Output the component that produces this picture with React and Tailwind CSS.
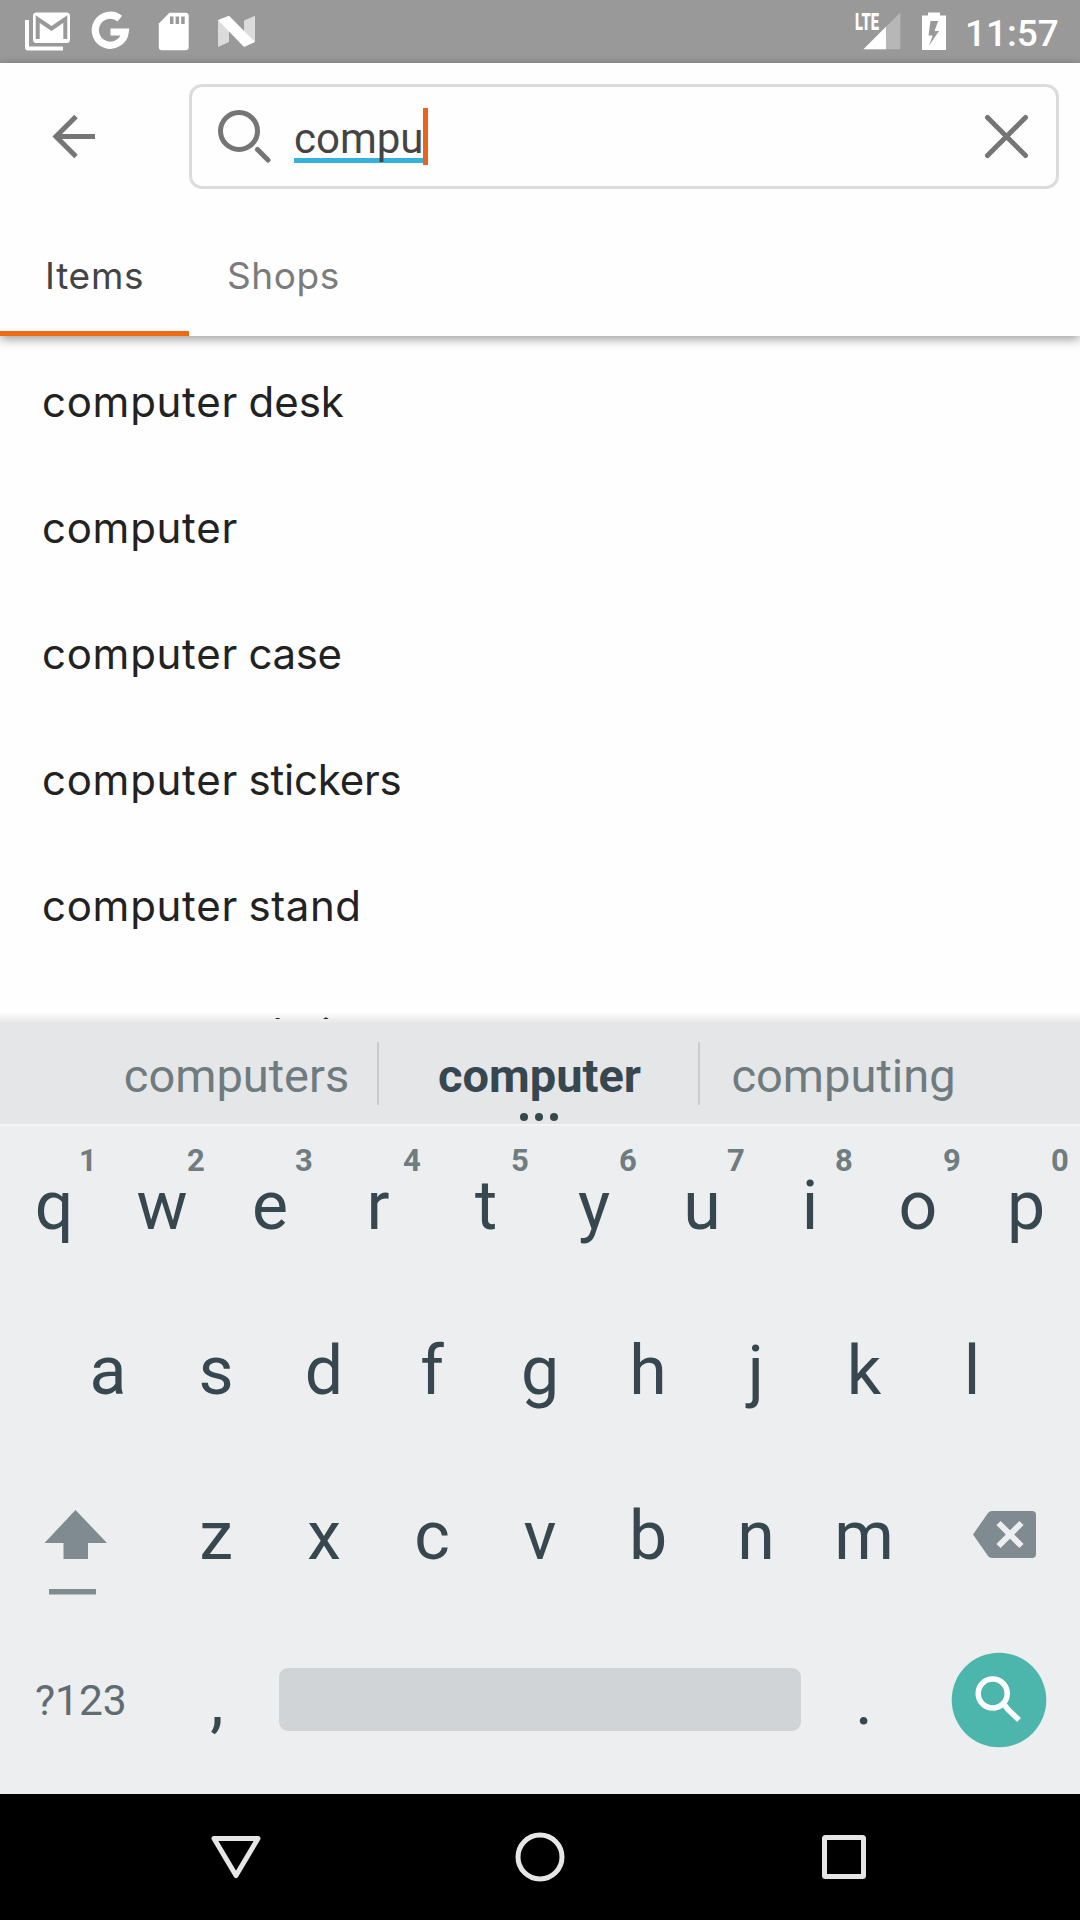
const letter = 'flex h-[165px] w-[108px] items-center justify-center pb-[5px]';

function StatusBar() {
  return (
    <header className="flex h-[63px] items-start bg-[#999999] text-white">
      <svg width="270" height="63" viewBox="0 0 270 63" fill="currentColor">
        <path d="M25 20h4v26.500h34V50.500H28q-3 0-3-3z" />
        <rect x="33" y="12.500" width="37" height="30.500" rx="3.500" />
        <path d="M37.700 39V19L51.500 28.500L65.300 19V39" fill="none" stroke="#999999" strokeWidth="4" />
        <path d="M119.800 18.600A15 15 0 1 0 125.200 32H110.500" fill="none" stroke="currentColor" strokeWidth="7.200" />
        <path d="M169.500 12.700H185.500q3.200 0 3.200 3.200V47q0 3.200-3.200 3.200H162q-3.200 0-3.200-3.200V23.500z" />
        <path d="M170 16.500h3.500v7.500H170zM175.600 16.500h3.500v7.500h-3.500zM181.200 16.500h3.500v7.500h-3.500z" fill="#999999" />
        <path d="M218 20V47L229 42V28zM255 15.700V42L244 38V20.500z" opacity="0.65" />
        <path d="M218 20L229 15.700L255 42L244 47z" />
      </svg>
      <div className="ml-auto flex h-full">
        <div className="relative w-[58px]">
          <span className="absolute left-[2px] top-[11px] origin-left scale-x-[0.640] text-[23px] font-black leading-[23px]">LTE</span>
          <svg className="absolute left-0 top-0" width="58" height="63" viewBox="853 0 58 63" fill="currentColor">
            <path d="M900.300 12.500V49.300H863.500z" opacity="0.3" />
            <path d="M886 26.800V49.300H863.500z" />
          </svg>
        </div>
        <svg width="48" height="63" viewBox="911 0 48 63" fill="currentColor">
          <path fillRule="evenodd" d="M928 12.500h12v3h6V50H922V15.500h6zM930.500 21L928.500 35.500H932.700L928.800 46L939 31H934.500L938.200 21z" />
        </svg>
        <span className="mt-[12px] w-[121px] pl-[6px] text-[37px] font-medium leading-[43px]">11:57</span>
      </div>
    </header>
  );
}

function SearchHeader() {
  return (
    <div className="relative z-10 h-[273px] bg-[#fefefe] shadow-[0_3px_10px_rgba(0,0,0,0.4)]">
      <div className="flex h-[147px] pt-[21px]">
        <svg className="ml-[52px] mt-[30px]" width="46" height="46" viewBox="0 0 46 46" fill="none" stroke="#757575" strokeWidth="5">
          <path d="M43 22.500H4M24 2.500L4 22.500L24 42.500" />
        </svg>
        <div className="ml-[91px] flex h-[105px] w-[870px] rounded-[13px] border-[3px] border-[#dcdcdc]">
          <svg className="ml-[24px] mt-[20px]" width="58" height="58" viewBox="0 0 58 58" fill="none" stroke="#757575" strokeWidth="5" strokeLinecap="round">
            <circle cx="23" cy="24" r="18.500" />
            <path d="M41.500 42.500L52 53" />
          </svg>
          <div className="relative ml-[20px] mt-[21px] flex h-[57px] text-[42px] leading-[62px] text-[#444444]">
            <span className="absolute left-0 top-[50px] h-[5px] w-[129px] bg-[#35b1de]" />
            <span className="relative w-[129px]">compu</span>
            <span className="h-[57px] w-[5px] bg-[#e8651a]" />
          </div>
          <svg className="ml-auto mr-[26px] mt-[26px]" width="48" height="48" viewBox="0 0 48 48" fill="none" stroke="#757575" strokeWidth="5" strokeLinecap="round">
            <path d="M5.500 4.500L43.500 42.500M43.500 4.500L5.500 42.500" />
          </svg>
        </div>
      </div>
      <nav className="flex h-[126px] font-[Inter,sans-serif] text-[37px] leading-[44px]">
        <div className="h-full w-[189px] border-b-[5px] border-[#f06a14] pl-[45px] pt-[44px] tracking-[0.7px] text-[#444444]">Items</div>
        <div className="pl-[38px] pt-[44px] tracking-[0.6px] text-[#7b7b7b]">Shops</div>
      </nav>
    </div>
  );
}

const results = [
  ['desk', 'tracking-normal'],
  ['', ''],
  ['case', 'tracking-[-0.400px]'],
  ['stickers', 'tracking-[-0.200px]'],
  ['stand', 'tracking-[0.600px]'],
  ['chair', 'tracking-normal'],
];

function Results() {
  return (
    <div className="relative h-[686px] overflow-hidden bg-[#fefefe] pt-[3px] font-[Inter,sans-serif] text-[42px] text-[#222222]">
      <ul>
        {results.map(([word, spacing]) => (
          <li key={word} className="h-[126px] pl-[42px] leading-[126px] last:pt-[2px]">
            <span className="tracking-[0.720px] [word-spacing:-2px]">computer </span>
            <span className={spacing}>{word}</span>
          </li>
        ))}
      </ul>
      <div className="absolute inset-x-0 bottom-0 h-[3px] bg-[#ececec]" />
      <div className="absolute inset-x-0 bottom-[3px] h-[7px] bg-gradient-to-t from-black/6 to-transparent" />
    </div>
  );
}

function Suggestions() {
  return (
    <div className="flex h-[104px] items-start border-b-2 border-[#f2f4f5] bg-[#e4e6e7] text-[47px] leading-[56px] text-[#6f7b7f]">
      <span className="w-[377px] pl-[96px] pt-[26px] text-center">computers</span>
      <span className="mt-[20px] h-[63px] w-[2px] bg-[#c9cdd0]" />
      <span className="relative w-[319px] pl-[2px] pt-[26px] text-center font-bold text-[#37474f]">
        computer
        <span className="absolute left-[141px] top-[91px] flex gap-[7px]">
          <i className="size-[8px] rounded-full bg-[#37474f]" />
          <i className="size-[8px] rounded-full bg-[#37474f]" />
          <i className="size-[8px] rounded-full bg-[#37474f]" />
        </span>
      </span>
      <span className="mt-[20px] h-[63px] w-[2px] bg-[#c9cdd0]" />
      <span className="w-[287px] pt-[26px] text-center">computing</span>
    </div>
  );
}

function Keyboard() {
  return (
    <div className="h-[668px] bg-[#eceeef] text-[68px] leading-[80px] text-[#37474f]">
      <div className="flex">
        {[...'qwertyuiop'].map((c, i) => (
          <div key={c} className={`${letter} relative`}>
            {c}
            <sup className="absolute left-[68px] top-[17px] w-[40px] text-center text-[31px] font-bold leading-[36px] text-[#6f7c80]">{(i + 1) % 10}</sup>
          </div>
        ))}
      </div>
      <div className="flex justify-center">
        {[...'asdfghjkl'].map((c) => <div key={c} className={letter}>{c}</div>)}
      </div>
      <div className="flex">
        <svg width="162" height="165" viewBox="0 1456 162 165" fill="#7f8b90">
          <path d="M75.500 1510L107 1543H88V1559H63.500V1543H44.500zM49 1589H96V1594.500H49z" />
        </svg>
        {[...'zxcvbnm'].map((c) => <div key={c} className={letter}>{c}</div>)}
        <svg width="162" height="165" viewBox="918 1456 162 165">
          <path d="M992 1511H1032q4 0 4 4V1554q0 4-4 4H992q-2.500 0-4-2L973 1534.500L988 1513q1.500-2 4-2z" fill="#7f8b90" />
          <path d="M998.500 1523L1021.500 1546M1021.500 1523L998.500 1546" stroke="#eceeef" strokeWidth="6" />
        </svg>
      </div>
      <div className="flex">
        <div className="flex h-[165px] w-[162px] items-center pb-[6px] pl-[35px] text-[42.500px] text-[#5f6c72]">?123</div>
        <div className={`${letter} pl-[2px]`}>,</div>
        <div className="mx-[9px] mt-[47px] h-[63px] w-[522px] rounded-[9px] bg-[#d0d4d7]" />
        <div className={letter}>.</div>
        <svg width="162" height="165" viewBox="918 1621 162 165">
          <circle cx="999" cy="1700" r="47.300" fill="#4db6ac" />
          <circle cx="992.700" cy="1693.500" r="14.500" fill="none" stroke="white" strokeWidth="5.500" />
          <path d="M1004.500 1705L1008 1709.500L1019 1720" fill="none" stroke="white" strokeWidth="5.500" strokeLinejoin="round" />
        </svg>
      </div>
    </div>
  );
}

function SystemNav() {
  return (
    <footer className="flex h-[126px] items-center justify-center gap-[244px] bg-black">
      {[
        <path key="b" d="M8 11.500H52L30 48.500z" />,
        <circle key="h" cx="30" cy="30" r="22" />,
        <rect key="r" x="10.500" y="10.500" width="39" height="39" rx="1" />,
      ].map((shape) => (
        <svg key={shape.key} width="60" height="60" viewBox="0 0 60 60" fill="none" stroke="#e6e6e6" strokeWidth="5" strokeLinejoin="round">
          {shape}
        </svg>
      ))}
    </footer>
  );
}

export default function App() {
  return (
    <main className="flex h-[1920px] w-[1080px] flex-col overflow-hidden bg-[#fefefe] font-[Roboto,sans-serif]">
      <StatusBar />
      <SearchHeader />
      <Results />
      <Suggestions />
      <Keyboard />
      <SystemNav />
    </main>
  );
}
